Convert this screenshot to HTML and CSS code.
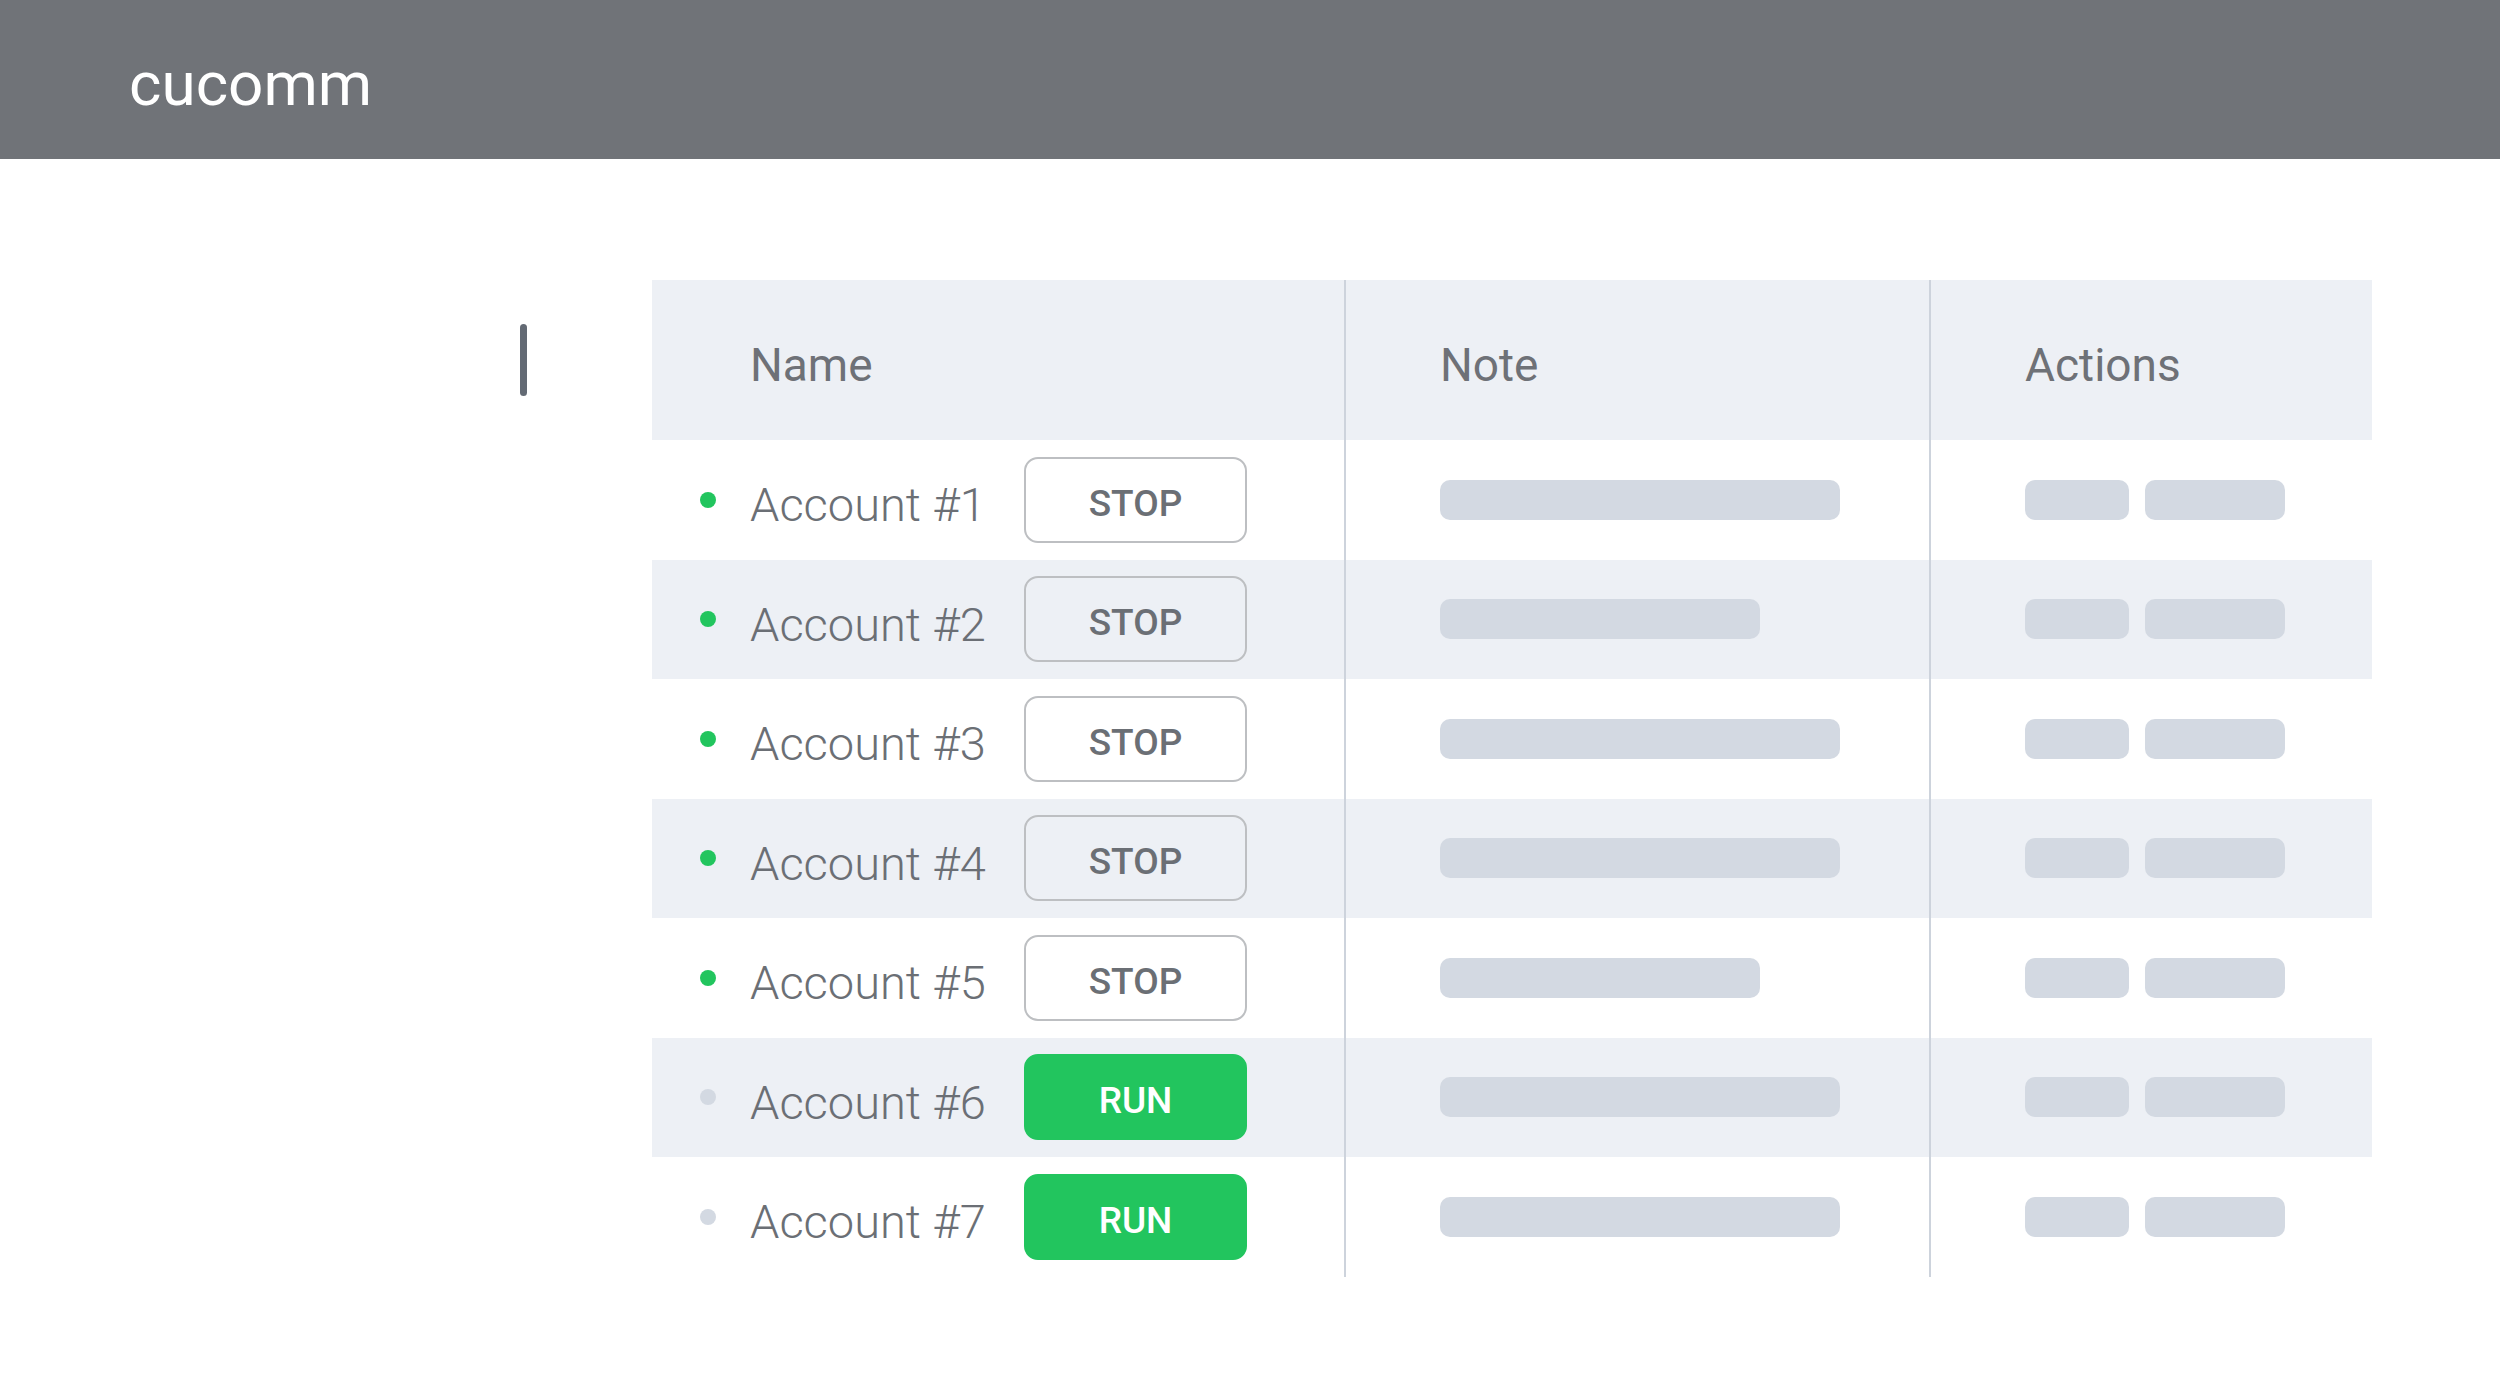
FILE: index.html
```html
<!DOCTYPE html>
<html lang="en">
<head>
<meta charset="utf-8">
<title>cucomm</title>
<link rel="stylesheet" href="styles.css">
</head>
<body>
<header class="topbar">
  <div class="brand">cucomm</div>
</header>
<main class="content">
  <div class="rail"><span class="rail-mark"></span></div>
  <div class="table">
    <div class="row head">
      <div class="cell c-name"><span class="th">Name</span></div>
      <div class="cell c-note"><span class="th">Note</span></div>
      <div class="cell c-act"><span class="th">Actions</span></div>
    </div>

    <div class="row">
      <div class="cell c-name"><span class="dot on"></span><span class="acc">Account #1</span><button class="btn stop">STOP</button></div>
      <div class="cell c-note"><span class="sk note-l"></span></div>
      <div class="cell c-act"><span class="sk act-a"></span><span class="sk act-b"></span></div>
    </div>
    <div class="row alt">
      <div class="cell c-name"><span class="dot on"></span><span class="acc">Account #2</span><button class="btn stop">STOP</button></div>
      <div class="cell c-note"><span class="sk note-s"></span></div>
      <div class="cell c-act"><span class="sk act-a"></span><span class="sk act-b"></span></div>
    </div>
    <div class="row">
      <div class="cell c-name"><span class="dot on"></span><span class="acc">Account #3</span><button class="btn stop">STOP</button></div>
      <div class="cell c-note"><span class="sk note-l"></span></div>
      <div class="cell c-act"><span class="sk act-a"></span><span class="sk act-b"></span></div>
    </div>
    <div class="row alt">
      <div class="cell c-name"><span class="dot on"></span><span class="acc">Account #4</span><button class="btn stop">STOP</button></div>
      <div class="cell c-note"><span class="sk note-l"></span></div>
      <div class="cell c-act"><span class="sk act-a"></span><span class="sk act-b"></span></div>
    </div>
    <div class="row">
      <div class="cell c-name"><span class="dot on"></span><span class="acc">Account #5</span><button class="btn stop">STOP</button></div>
      <div class="cell c-note"><span class="sk note-s"></span></div>
      <div class="cell c-act"><span class="sk act-a"></span><span class="sk act-b"></span></div>
    </div>
    <div class="row alt">
      <div class="cell c-name"><span class="dot off"></span><span class="acc">Account #6</span><button class="btn run">RUN</button></div>
      <div class="cell c-note"><span class="sk note-l"></span></div>
      <div class="cell c-act"><span class="sk act-a"></span><span class="sk act-b"></span></div>
    </div>
    <div class="row">
      <div class="cell c-name"><span class="dot off"></span><span class="acc">Account #7</span><button class="btn run">RUN</button></div>
      <div class="cell c-note"><span class="sk note-l"></span></div>
      <div class="cell c-act"><span class="sk act-a"></span><span class="sk act-b"></span></div>
    </div>
  </div>
</main>
</body>
</html>
```

FILE: styles.css
```css
* { box-sizing: border-box; }

html, body {
  margin: 0;
  padding: 0;
  background: #ffffff;
  font-family: Roboto, "Liberation Sans", Arial, sans-serif;
}

.topbar {
  height: 159px;
  background: #707378;
  padding: 8px 0 0 129px;
}

.brand {
  color: #ffffff;
  font-size: 62px;
  line-height: 151px;
  font-weight: 400;
}

.content {
  display: flex;
  padding-top: 121px;
  padding-left: 520px;
}

.rail {
  width: 132px;
  padding-top: 44px;
}

.rail-mark {
  display: block;
  width: 7px;
  height: 72px;
  border-radius: 4px;
  background: #636a74;
}

.table {
  width: 1720px;
}

.row {
  display: grid;
  grid-template-columns: 692px 585px 443px;
  height: 119.5px;
  background: #ffffff;
}

.row.alt,
.row.head {
  background: #edf0f5;
}

.row.head {
  height: 160px;
}

.cell {
  display: flex;
  align-items: center;
}

.c-name {
  padding-left: 48px;
}

.c-note,
.c-act {
  border-left: 2px solid #cdd3dc;
  padding-left: 94px;
}

.head .c-name {
  padding-left: 98px;
}

.th {
  font-size: 46px;
  color: #6e7177;
  padding-top: 10px;
  line-height: normal;
}

.dot {
  width: 16px;
  height: 16px;
  border-radius: 50%;
  margin-right: 34px;
  flex: none;
}

.dot.on { background: #22c55e; }
.dot.off { background: #d3d9e2; }

.acc {
  width: 274px;
  font-size: 47px;
  font-weight: 300;
  color: #6b6f75;
  padding-top: 10px;
  white-space: nowrap;
}

.btn {
  width: 223px;
  height: 86px;
  border-radius: 14px;
  font-family: Roboto, "Liberation Sans", Arial, sans-serif;
  font-size: 37px;
  font-weight: 500;
  padding: 7px 0 0;
  display: flex;
  align-items: center;
  justify-content: center;
  line-height: normal;
  cursor: pointer;
}

.btn.stop {
  background: transparent;
  border: 2px solid #bdbfc2;
  color: #6b6f75;
}

.btn.run {
  background: #22c55e;
  border: 2px solid #22c55e;
  color: #ffffff;
}

.sk {
  display: block;
  height: 40px;
  border-radius: 10px;
  background: #d3d9e2;
}

.note-l { width: 400px; }
.note-s { width: 320px; }
.act-a { width: 104px; margin-right: 16px; }
.act-b { width: 140px; }
```
